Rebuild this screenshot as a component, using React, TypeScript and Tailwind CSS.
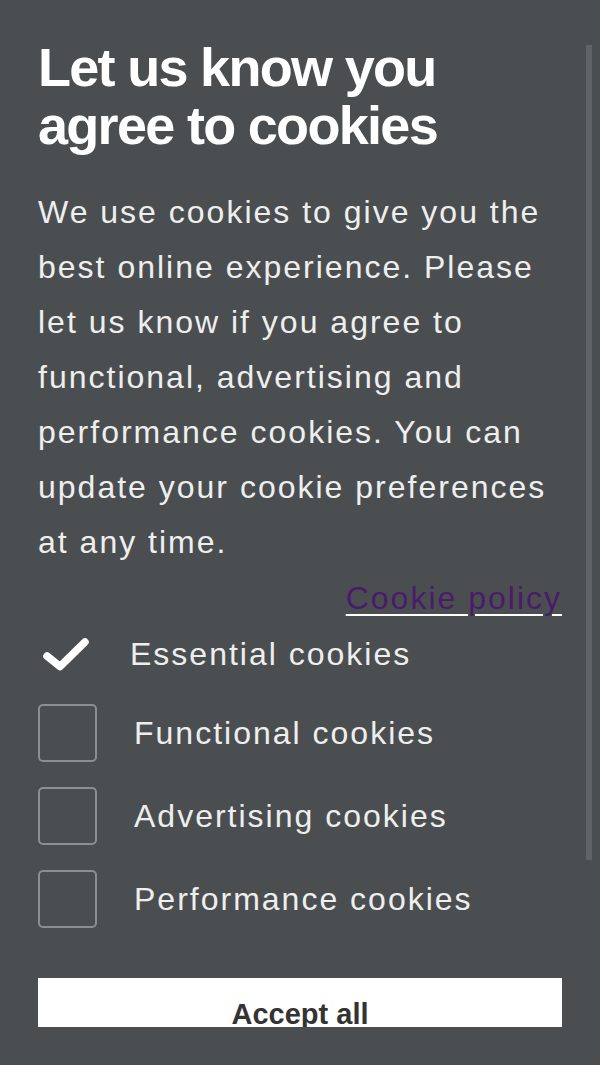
import { useState } from "react";

const options = [
    { id: "functional", label: "Functional cookies" },
    { id: "advertising", label: "Advertising cookies" },
    { id: "performance", label: "Performance cookies" },
];

const CheckMark = () => (
    <svg width="50" height="36" viewBox="0 0 50 36" fill="none">
        <path
            d="M5 20 L18 30.5 L43 6"
            stroke="#ffffff"
            strokeWidth="7.5"
            strokeLinecap="round"
            strokeLinejoin="round"
        />
    </svg>
);

const App = () => {
    const [checked, setChecked] = useState<Record<string, boolean>>({});

    return (
        <div className="relative w-[600px] h-[1065px] bg-[#4a4e51] font-['Liberation_Sans',Arial,sans-serif]">
            {/* scroll area */}
            <div className="h-[1027px] overflow-hidden px-[38px] pt-[38px]">

                <h1 className="text-[54px] leading-[58px] font-bold tracking-[-1.7px] text-white">
                    Let us know you agree to cookies
                </h1>

                <p className="mt-[31px] text-[32px] leading-[55px] tracking-[2px] text-[#eeeeee]">
                    We use cookies to give you the best online experience. Please let us know if you agree to
                    functional, advertising and performance cookies. You can update your cookie preferences at any time.
                </p>

                <div className="mt-[10px] flex justify-end">
                    <a
                        href="#"
                        className="text-[32px] leading-[36px] tracking-[2px] text-[#4a1a6b] underline decoration-white decoration-2 underline-offset-[5px]"
                    >
                        Cookie policy
                    </a>
                </div>

                {/* cookie options */}
                <div className="mt-[12px] flex flex-col gap-[25px]">

                    <div className="flex items-center h-[51px] gap-[37px]">
                        <div className="w-[55px] flex justify-end pr-[1px]">
                            <CheckMark />
                        </div>
                        <span className="text-[32px] tracking-[2px] text-[#eeeeee]">Essential cookies</span>
                    </div>

                    {options.map((opt) => (
                        <label key={opt.id} className="flex items-center h-[58px] gap-[37px] cursor-pointer">
                            <input
                                type="checkbox"
                                className="sr-only"
                                checked={!!checked[opt.id]}
                                onChange={() => setChecked((c) => ({ ...c, [opt.id]: !c[opt.id] }))}
                            />
                            <span className="w-[59px] h-[58px] shrink-0 rounded-[5px] border-2 border-[#8c8f92]" />
                            <span className="text-[32px] tracking-[2px] text-[#eeeeee]">{opt.label}</span>
                        </label>
                    ))}
                </div>

                <button className="mt-[50px] w-full h-[72px] bg-white pt-[19px] flex justify-center items-start">
                    <span className="text-[29px] leading-[34px] font-bold text-[#333333]">Accept all</span>
                </button>
            </div>

            {/* scrollbar thumb */}
            <div className="absolute right-[8px] top-[45px] w-[6px] h-[815px] bg-[#606467]" />
        </div>
    );
};

export default App;
